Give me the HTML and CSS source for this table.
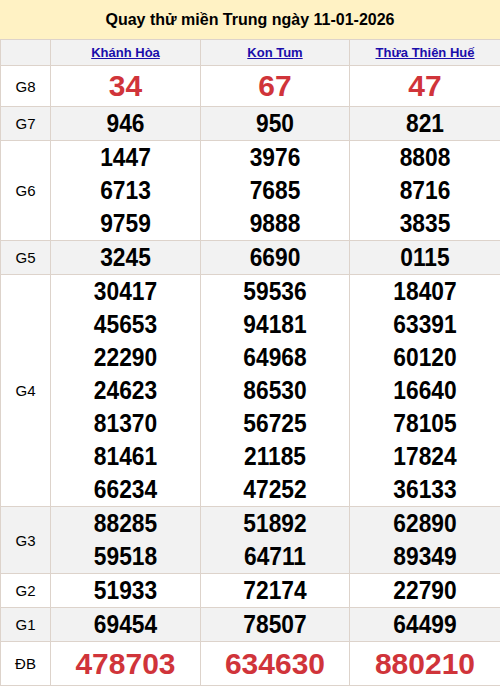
FILE: index.html
```html
<!DOCTYPE html>
<html lang="vi">
<head>
<meta charset="utf-8">
<link rel="stylesheet" href="styles.css">
</head>
<body>
<div class="title">Quay thử miền Trung ngày 11-01-2026</div>
<table class="kq">
<colgroup><col class="c0"><col class="c1"><col class="c2"><col class="c3"></colgroup>
<tr class="head"><th></th><th><a href="#">Khánh Hòa</a></th><th><a href="#">Kon Tum</a></th><th><a href="#">Thừa Thiên Huế</a></th></tr>
<tr class="g8"><td class="lbl">G8</td><td class="red">34</td><td class="red">67</td><td class="red">47</td></tr>
<tr class="alt"><td class="lbl">G7</td><td class="num"><div>946</div></td><td class="num"><div>950</div></td><td class="num"><div>821</div></td></tr>
<tr><td class="lbl">G6</td><td class="num"><div>1447</div><div>6713</div><div>9759</div></td><td class="num"><div>3976</div><div>7685</div><div>9888</div></td><td class="num"><div>8808</div><div>8716</div><div>3835</div></td></tr>
<tr class="alt"><td class="lbl">G5</td><td class="num"><div>3245</div></td><td class="num"><div>6690</div></td><td class="num"><div>0115</div></td></tr>
<tr><td class="lbl">G4</td>
<td class="num"><div>30417</div><div>45653</div><div>22290</div><div>24623</div><div>81370</div><div>81461</div><div>66234</div></td>
<td class="num"><div>59536</div><div>94181</div><div>64968</div><div>86530</div><div>56725</div><div>21185</div><div>47252</div></td>
<td class="num"><div>18407</div><div>63391</div><div>60120</div><div>16640</div><div>78105</div><div>17824</div><div>36133</div></td></tr>
<tr class="alt"><td class="lbl">G3</td><td class="num"><div>88285</div><div>59518</div></td><td class="num"><div>51892</div><div>64711</div></td><td class="num"><div>62890</div><div>89349</div></td></tr>
<tr><td class="lbl">G2</td><td class="num"><div>51933</div></td><td class="num"><div>72174</div></td><td class="num"><div>22790</div></td></tr>
<tr class="alt"><td class="lbl">G1</td><td class="num"><div>69454</div></td><td class="num"><div>78507</div></td><td class="num"><div>64499</div></td></tr>
<tr class="db"><td class="lbl">ĐB</td><td class="red">478703</td><td class="red">634630</td><td class="red">880210</td></tr>
</table>
</body>
</html>
```
FILE: styles.css
```css
html, body { margin: 0; padding: 0; background: #fff; }
body { font-family: "Liberation Sans", Arial, sans-serif; color: #000; width: 500px; }
.title {
  height: 39px;
  line-height: 39px;
  background: #fff2c4;
  text-align: center;
  font-weight: bold;
  font-size: 16px;
}
.kq {
  border-collapse: collapse;
  width: 500px;
  table-layout: fixed;
}
.c0 { width: 50px; }
.c1 { width: 150px; }
.c2 { width: 149px; }
.c3 { width: 151px; }
.kq th, .kq td {
  border: 1px solid #ddd3cb;
  padding: 0;
  text-align: center;
  vertical-align: middle;
}
.head th { height: 25px; background: #f2f2f2; font-size: 13px; }
.head a { color: #1a0dab; font-weight: bold; text-decoration: underline; }
.alt td { background: #f2f2f2; }
.lbl { font-size: 15px; }
.num {
  font-family: "Liberation Sans", Arial, sans-serif;
  font-weight: bold;
  font-size: 25px;
  line-height: 33px;
}
.num div { transform: scaleX(0.91); }
.red {
  color: #d0343a;
  font-weight: bold;
  font-size: 30px;
  height: 40px;
}
.db .red { height: 43px; }
```
